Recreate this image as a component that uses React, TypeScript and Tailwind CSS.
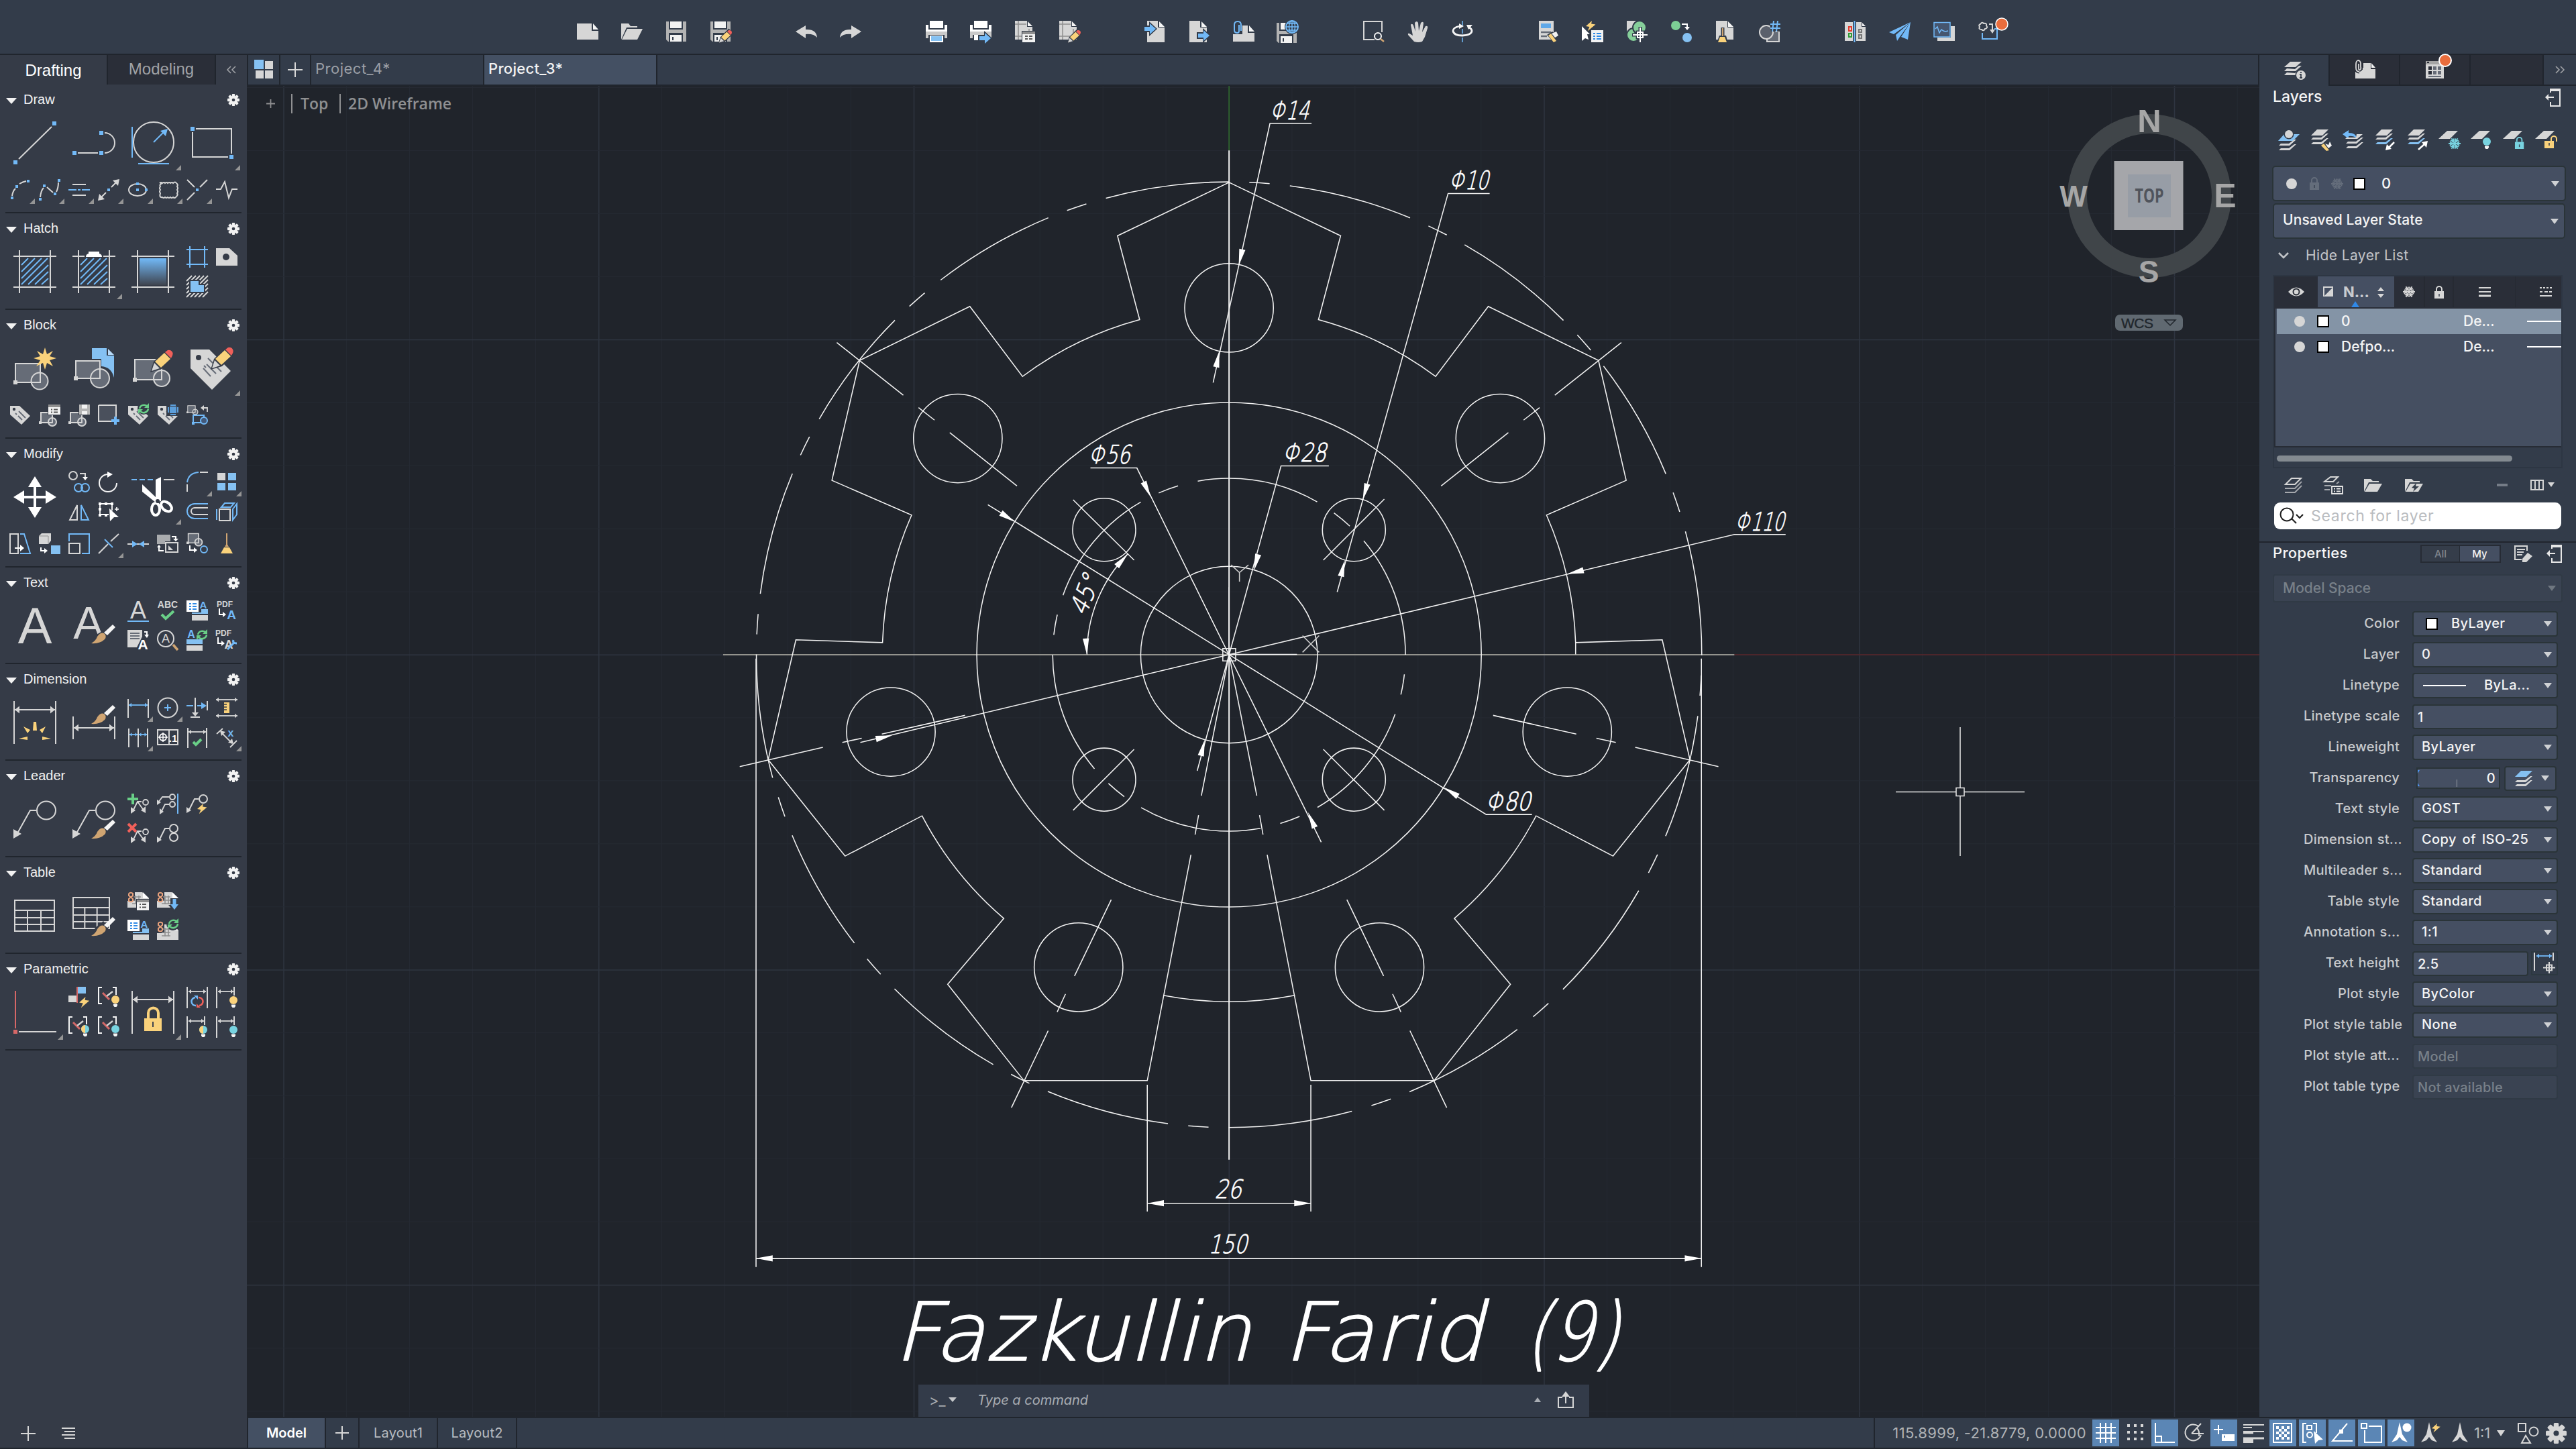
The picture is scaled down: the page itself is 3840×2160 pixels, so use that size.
import React from 'react';

const W = '#d6d6d6';
const B = '#72b9f7';
const BF = '#85c1f2';
const Y = '#fad27b';
const R = '#f0605a';
const G = '#69cf87';
const T = '#d0a572';
const C = '#78d3e0';
const D = '#666c77';
const BG = '#353b47';

type Node = React.ReactNode;

/* Drawing shorthands: stroked path, filled path, square grip */
const l = (d: string, c = W, w = 2) => <path d={d} fill="none" stroke={c} strokeWidth={w} />;
const f = (d: string, c = W) => <path d={d} fill={c} />;
const q = (x: number, y: number, c = B, s = 4) => <rect x={x - s / 2} y={y - s / 2} width={s} height={s} fill={c} />;
const o = (x: number, y: number, r: number, c = W, w = 2, fill = 'none') => <circle cx={x} cy={y} r={r} fill={fill} stroke={c} strokeWidth={w} />;
const at = (x: number, y: number, n: Node, s = 1) => <g transform={`translate(${x} ${y}) scale(${s})`}>{n}</g>;
const tx = (x: number, y: number, s: number, t: string, c = W, w = 700) => (
  <text x={x} y={y} fontSize={s} fontWeight={w} fill={c} textAnchor="middle" fontFamily="Liberation Sans, sans-serif">{t}</text>
);

function Svg({ size = 32, children }: { size?: number; children: Node }) {
  return (
    <svg width={size} height={size} viewBox={`0 0 ${size} ${size}`} className="block shrink-0 overflow-visible">
      {children}
    </svg>
  );
}

/* Reusable pieces */
const pencil = (
  <>
    {f('M-2 33 L3 17 L24 -4 L36 8 L15 28Z', BG)}
    {f('M0 31 L4 19 L12 27Z')}
    {f('M5 17 L19 4 L28 13 L14 26Z', Y)}
    {f('M20 3 L24 0 Q29 -1 31 3 Q33 6 29 12Z', R)}
  </>
);
const brush = (
  <>
    {f('M0 28 Q7 24 9 18 Q14 11 19 13 Q24 17 20 22 Q13 29 0 28Z', T)}
    {f('M19 12 L32 0 L36 4 L24 16Z', '#f5f5f5')}
  </>
);
const bolt = f('M10 0 L0 9 L6 10 L3 17 L16 6 L9 5Z', Y);
const sync = (c = G) => (
  <>
    {l('M2 8 A7 7 0 0 1 14 5', c, 2.5)}
    {l('M15 8 A7 7 0 0 1 3 12', c, 2.5)}
    {f('M16 0 V7 H9Z', c)}
    {f('M0 16 V9 H7Z', c)}
  </>
);
const blockPair = (
  <>
    {l('M3 3 H20 V18 H3Z', W, 2)}
    {f('M4 4 H19 V17 H4Z', D)}
    {q(2, 18, W)}
    {o(20, 17, 6, W, 2, D)}
    {l('M20 11 V18 H14', W, 1.8)}
  </>
);
const tag = (
  <>
    {f('M1 2 H15 L31 17 L18 30 L1 15Z')}
    <circle cx={7} cy={7} r={2.2} fill={BG} />
    {l('M14 10 L24 20 M9 13 L11 15 M13 17 L19 23', D, 1.8)}
  </>
);
const dimArrow = (x1: number, x2: number, y: number, c = W, a = 4) => (
  <>
    {l(`M${x1} ${y} H${x2}`, c, 1.8)}
    {f(`M${x1} ${y} l${a} ${-a * 0.8} v${a * 1.6}Z`, c)}
    {f(`M${x2} ${y} l${-a} ${-a * 0.8} v${a * 1.6}Z`, c)}
  </>
);
const bulb = (c: string, split = false) => (
  <>
    <circle cx={6} cy={6} r={6} fill={c} />
    {split && f('M6 0 A6 6 0 0 0 6 12Z', Y)}
    {f('M3 12.5 H9 V15 L7.5 17 H4.5 L3 15Z', '#f5f5f5')}
  </>
);
const leader = (
  <>
    {l('M6 48 L25 14 H34', W, 2)}
    <ellipse cx={49} cy={14} rx={14} ry={13.5} fill="none" stroke={W} strokeWidth={2} />
    {f('M0 42 V56 L12 49Z')}
  </>
);
const miniLeader = (
  <>
    {l('M8 26 L15 12 H21 M15 12 L25 26', W, 1.8)}
    {f('M5 20 V30 L12 25Z')}
    {f('M20 25 L27 29 V19Z')}
    {o(27, 13, 4, W, 1.8)}
  </>
);
const table = (w: number) => (
  <>
    {l(`M1 1 H${w} V47 H1Z M1 16 H${w} M1 27 H${w} M1 37 H${w} M${w / 3} 16 V47 M${(w * 2) / 3} 16 V47`)}
  </>
);
const link = <>{l('M2 5 a4 4 0 0 1 6 0 v3 l-6 5 v3 a4 4 0 0 0 6 0', '#e8a27c', 2)}{l('M2 5 v3 l6 5 v3', '#e8a27c', 2)}</>;
const sheet = <>{f('M11 3 H22 L32 12 V26 H0 V16 H11Z')}{f('M23 3 L32 12 H23Z', '#fff')}{l('M9 10 H20 M7 15 H20 M7 20 H20 M12 8 V21 M17 8 V21', '#8f8f8f', 1.6)}</>;
const listA = (
  <>
    {f('M22 13 H32 V20 H8 V18 H22Z', BF)}
    {f('M8 22 H32 V30 H8Z')}
    {f('M0 0 H18 V17 H0Z', '#fff')}
    {l('M4 5 H7 M4 9 H7 M4 13 H7 M9 5 H15 M9 9 H15 M9 13 H15', '#2f8ae5', 2)}
    {tx(25, 11.5, 15, 'A', B)}
  </>
);
const constr = (
  <>
    {l('M6 1 H1 V25 H6 M22 1 H27 V12', '#f5f5f5')}
    {l('M7 9 L17 19', '#d56767', 3)}
    {l('M13 14 L22 7', W, 2.4)}
  </>
);
const hatchFrame = l('M0 9 H64 M0 55 H64 M9 0 V64 M55 0 V64');
const hatchLines = l('M12 22 L22 12 M12 32 L32 12 M12 42 L42 12 M12 51 L51 12 M22 51 L52 22 M32 51 L52 32 M42 51 L52 42', B, 2);

interface Tool { n: Node; c?: boolean; }
const t = (n: Node, c = false): Tool => ({ n, c });

/* Draw */
const drawBig: Tool[] = [
  t(<>{l('M8 56 L57 8')}{q(3, 61, B, 6)}{q(61, 3, B, 6)}</>),
  t(<>{l('M8 47 H38 M48 17 a15 15 0 0 1 0 30')}{q(3, 47, B, 6)}{q(43, 47, B, 6)}{q(43, 17, B, 6)}</>),
  t(<>{o(33, 31, 30)}{l('M1 8 V54 M10 63 H56 M33 31 L50 14', B)}{f('M54 11 L43 14 L51 22Z', B)}</>, true),
  t(<>{l('M8 11 H61 V48 M56 53 H3 V16')}{q(3, 11, B, 6)}{q(61, 53, B, 6)}</>, true),
];
const drawSmall: Tool[] = [
  t(<>{l('M4 25 Q5 18 9 14 M15 7 Q20 4 25 3')}{q(4, 28)}{q(11, 11)}{q(28, 3)}</>, true),
  t(<>{l('M2 27 Q3 17 7 13 M12 12 L21 20 M26 19 Q29 13 29 5')}{q(2, 30)}{q(8, 10)}{q(24, 22)}{q(30, 2)}</>, true),
  t(<>{l('M6 8 H26 M6 24 H26')}{l('M0 16 H12 M14 16 H18 M20 16 H32', B)}</>, true),
  t(<>{l('M3 29 L12 20 M20 12 L29 3')}{f('M32 0 L22 2 L30 10Z')}{f('M0 32 L2 22 L10 30Z')}{q(16, 16)}</>, true),
  t(<><ellipse cx={15} cy={16} rx={13} ry={9} fill="none" stroke={W} strokeWidth={2} />{q(15, 7)}{q(15, 16)}{q(28, 16)}</>, true),
  t(<>{l('M4 6 q2 -2 4 0 q2.5 -2 4 0 q2.5 -2 4 0 q2.5 -2 4 0 q2.5 -2 4 0 q3 -3 5 0 q3 2 1 5 q2 2.500 0 5 q2 2.500 0 5 q2 3 -2 6 q-2 2 -4 0 q-2.500 2 -4 0 q-2.500 2 -4 0 q-2.500 2 -4 0 q-2.500 2 -4 0 q-5 1 -3 -6 q-2 -2.500 0 -5 q-2 -2.500 0 -5 q-2 -3 3 -5', W, 2)}</>, true),
  t(<>{l('M1 1 L12 12 M31 1 L20 12 M12 20 L1 31')}{q(16, 16)}</>, true),
  t(l('M0 15 H7 L13 4 L19 28 L24 15 H32')),
];
/* Block */
const blockBig: Tool[] = [
  t(<>{l('M3 25 H40 V53 H3Z')}{f('M4 26 H39 V52 H4Z', D)}{q(3, 53, W, 6)}{o(39, 51, 12.500, W, 2, D)}{l('M40 38 V53 H27')}{f('M47 1 L50 11 L59 6 L54 14 L64 17 L54 20 L59 29 L50 24 L47 34 L44 24 L34 29 L40 20 L30 17 L40 14 L35 6 L44 11Z', Y)}</>),
  t(<>{f('M29 2 H51 V13 H62 V46 Q58 30 43 29 V18 H29Z', BF)}{f('M53 3 L62 12 H53Z', '#b6d9f7')}{l('M5 21 H41 V47 H5Z')}{f('M6 22 H40 V46 H6Z', D)}{q(5, 47, W, 6)}{o(41, 47, 14, W, 2, D)}{l('M41 33 V47 H27')}</>),
  t(<>{l('M5 19 H45 V49 H5Z')}{f('M6 20 H44 V48 H6Z', D)}{q(5, 49, W, 6)}{o(45, 47, 12, W, 2, D)}{l('M45 35 V49 H33')}{at(30, 5, pencil)}</>),
  t(<>{f('M0 4 H28 L60 36 L32 64 L0 32Z')}<circle cx={12} cy={16} r={4} fill={BG} />{l('M26 17 L46 37 M20 28 L23 31 M24 26 L38 40 M19 32 L30 44', D, 2)}{at(32, 1, pencil)}</>, true),
];
const blockSmall: Tool[] = [
  t(tag),
  t(<>{at(0, 9, blockPair)}{f('M13 -1 H33 V16 H13Z', BG)}{f('M14 0 H32 V4 H14Z', '#8f8f8f')}{f('M14 4 H32 V15 H14Z', '#f2f2f2')}{l('M18 7.500 H20 M22 7.500 H28 M18 11.500 H20 M22 11.500 H28', '#555', 1.800)}</>),
  t(<>{at(0, 9, blockPair)}{f('M15 -1 H33 V16 H15Z', BG)}{f('M16 0 H32 V15 H16Z', '#b5b5b5')}{f('M20 0 H28 V6 H20Z M20 10 H28 V15 H20Z', '#f2f2f2')}</>),
  t(<>{l('M1 1 H27 V18 M20 25 H1 V1')}{f('M2 2 H26 V24 H2Z', '#4a505c')}{l('M26 18 V30 M20 24 H32', B, 4)}</>),
  t(<>{tag}<circle cx={24} cy={6} r={9} fill={BG} />{at(16, -2, sync())}</>),
  t(<>{tag}{f('M14 -1 H33 V17 H14Z', BG)}{f('M19 3 H29 V13 H19Z', '#5d9fdb')}{l('M20 1 H28 M20 15 H28 M17 4 V12 M31 4 V12', '#5d9fdb')}</>),
  t(<>{at(0, 0, blockPair, 0.65)}{l('M31 11 V5 H24', W, 1.800)}{f('M26 1 V9 L21 5Z')}{l('M10 16 H26 V27 H10Z', B)}{q(10, 28, B)}{o(26, 24, 5, B, 2, '#43597a')}</>),
];
/* Modify */
const moveIcon = t(<>{l('M4 32 H60 M32 4 V60', '#fff', 4)}{f('M0 32 L16 22 V42Z M64 32 L48 22 V42Z M32 1 L22 17 H42Z M32 63 L22 47 H42Z', '#fff')}</>);
const trimIcon = t(<>{l('M0 6 H8 M12 6 H20 M24 6 H32', B)}{l('M48 6 H64', W)}{f('M36 6 L44 2 V38 L36 40 L16 24 V13 L36 32Z', '#fff')}<ellipse cx={36} cy={50} rx={6} ry={9} fill="none" stroke="#fff" strokeWidth={4} /><ellipse cx={52} cy={46} rx={6} ry={9} fill="none" stroke="#fff" strokeWidth={4} transform="rotate(-50 52 46)" /><circle cx={39} cy={38} r={3} fill={BG} /></>, true);
const modA: Tool[] = [
  t(<>{o(7, 6, 6)}{l('M17 3 H25 V10')}{f('M21 8 H29 L25 13Z', '#fff')}{o(15, 24, 6, B)}{o(25, 24, 6, B)}</>),
  t(<>{l('M15 4 A13 13 0 1 0 28 17', '#f5f5f5')}{f('M14 0 L22 4 L14 9Z', '#fff')}</>),
  t(<>{l('M13 6 V28 H2Z')}{l('M19 6 V28 H30Z', B)}</>),
  t(<>{l('M3 4 H21 V14 M3 4 V20 H16', '#fff', 1.800)}{q(3, 4, '#fff')}{q(12, 4, '#fff')}{q(21, 4, '#fff')}{q(3, 12, '#fff')}{q(3, 21, '#fff')}{q(12, 21, '#fff')}{f('M17 11 L31 24 H24 L18 30Z', '#fff')}{l('M28 9 V15 M25 12 H31', '#fff', 1.600)}</>),
];
const modB: Tool[] = [
  t(<>{l('M1 16 Q3 2 18 1', B)}{l('M20 1 H32 M1 19 V30')}</>, true),
  t(<>{f('M2 2 H14 V13 H2Z')}{f('M18 2 H30 V13 H18Z M2 17 H14 V28 H2Z M18 17 H30 V28 H18Z', BF)}</>, true),
  t(<>{l('M32 4 H12 A11 11 0 0 0 12 26 H32', B)}{l('M32 10 H12 A5 5 0 0 0 12 20 H32')}</>),
  t(<>{l('M5 12 H21 V29 H5Z')}{l('M1 12 V28 M8 9 L13 3 H27 L22 9Z M25 28 V12 L31 4 V20Z', B)}</>),
];
const modSmall: Tool[] = [
  t(<>{l('M1 1 H13 V30 H1Z')}{l('M16 1 H22 L31 30 H16', B)}{l('M8 22 H18', '#fff')}{f('M16 17 L22 22 L16 27Z', '#fff')}</>),
  t(<>{f('M0 4 L4 0 H18 V11 L14 16 H0Z')}{l('M0 4 H14 V16', '#8f8f8f', 1)}{f('M18 18 H32 V31 H18Z', BF)}{l('M3 21 V26 H9', '#fff')}{f('M8 22 L13 26 L8 30Z', '#fff')}</>),
  t(<>{l('M1 12 V1 H31 V30 H20', B)}{l('M1 15 H17 V30 H1Z')}</>),
  t(<>{l('M1 30 L15 16 M19 12 L31 1')}{l('M10 9 L22 21', B)}</>, true),
  t(<>{l('M0 16 H32')}{f('M7 11 V21 L15 16Z M25 11 V21 L17 16Z', B)}</>),
  t(<>{f('M0 2 H20 V12 H12 V16 H0Z', '#a9abae')}{l('M13 14 H31 V28 H13Z')}{f('M17 18 L24 25 H17Z')}{l('M22 5 H28 V9 M3 20 V26 H10', '#fff')}{f('M24 8 H32 L28 12Z M0 21 L3 17 L6 21Z', '#fff')}</>),
  t(<>{at(0, -2, blockPair, 0.9)}{l('M5 18 V25 H12', '#fff')}{f('M11 21 L16 25 L11 29Z', '#fff')}{o(26, 24, 5, B)}</>),
  t(<>{l('M16 0 V18', T)}{f('M13 20 L16 15 L19 20Z', T)}{f('M12 21 H20 L25 30 H7Z', Y)}</>),
];
const textBig: Tool[] = [
  t(tx(32, 58, 76, 'A', W, 400)),
  t(<>{tx(24, 51, 68, 'A', W, 400)}{at(28, 30, <>{f('M-2 31 L6 16 L20 8 L26 16 L20 26Z', BG)}{brush}</>)}</>),
];
const textSmall: Tool[] = [
  t(<>{tx(16, 27, 36, 'A', W, 400)}{l('M0 31 H32', B)}</>),
  t(<>{tx(16, 11, 14, 'ABC')}{l('M7 21 L13 27 L25 16', G, 4)}</>),
  t(listA),
  t(<>{tx(13, 10, 12, 'PDF')}{l('M5 12 V21 H10', '#fff')}{f('M10 17 L15 21 L10 25Z', '#fff')}{tx(23, 28, 19, 'A', B)}</>),
  t(<>{f('M0 0 H22 V10 L14 26 H0Z')}{l('M4 5 H18 M4 9 H18 M4 13 H18', D)}{tx(23, 29, 21, 'A', '#fff')}{l('M25 3 H29 V8', '#fff')}{f('M25 7 H32 L29 12Z', '#fff')}</>),
  t(<>{o(13, 13, 12)}{tx(13, 19, 18, 'A', W, 400)}{l('M24 22 L31 30', T, 3.500)}</>),
  t(<>{tx(7, 12, 16, 'A', B)}{f('M0 14 H24 V21 H0Z', BF)}{f('M0 23 H24 V31 H0Z')}{at(15, -1, sync())}</>),
  t(<>{tx(11, 9, 12, 'PDF')}{l('M3 11 V20 H8', '#fff')}{f('M8 16 L13 20 L8 24Z', '#fff')}{tx(19, 28, 18, 'A', W)}{l('M17 29 L28 18 M26 15 Q24 20 31 20', B, 3)}</>),
];
const dimBig: Tool[] = [
  t(<>{l('M1 0 V64 M63 0 V64')}{dimArrow(2, 62, 13, W, 7)}{f('M30 31 H34 L35 44 H29Z M15 38 L25 43 L21 48Z M48 38 L39 43 L43 48Z M8 56 L21 53 V58Z M56 56 L43 53 V58Z', Y)}</>),
  t(<>{l('M1 23 V57 M63 23 V57')}{dimArrow(2, 62, 40, W, 7)}{at(28, 6, <>{f('M-2 31 L8 14 L22 10 L26 18 L20 28Z', BG)}{brush}</>)}</>),
];
const dimSmall: Tool[] = [
  t(<>{l('M1 3 V31 M31 3 V31')}{dimArrow(2, 30, 12, B)}</>, true),
  t(<>{o(16, 16, 14.500)}{l('M16 11 V21 M11 16 H21', B)}</>, true),
  t(<>{l('M13 1 V25 M6 30 H20')}{f('M8 23 H18 L13 29Z')}{l('M0 13 H10 M16 13 H24', B)}{f('M22 8 V18 L30 13Z', B)}{l('M31 6 V20')}</>),
  t(<>{dimArrow(0, 32, 4)}{dimArrow(0, 32, 28)}{f('M12 8 H20 V24 H12Z', Y)}{l('M12 11 H16 M12 15 H16 M12 19 H16', BG, 1.500)}</>),
  t(<>{l('M2 3 V31 M16 3 V31 M30 3 V31')}{dimArrow(3, 15, 12, B, 3.500)}{dimArrow(17, 29, 12, B, 3.500)}</>, true),
  t(<>{l('M1 5 H31 V27 H1Z M18 5 V27')}{o(9, 16, 5, '#fff')}{l('M9 9 V23 M2 16 H16', '#fff', 1.500)}{tx(24, 23, 15, '.1', '#fff')}</>),
  t(<>{l('M2 2 V32 M30 2 V32')}{dimArrow(3, 29, 8)}{l('M10 23 L14 27 L22 19', G, 4)}</>),
  t(<>{l('M1 11 L10 3 M21 31 L31 21 M8 9 L24 25', W, 1.800)}{f('M6 6 L14 8 L8 14Z M26 26 L18 24 L24 18Z')}{tx(22, 15, 16, 'x', B)}</>, true),
];
const ldBig: Tool[] = [t(at(0, 5, leader)), t(<>{at(0, 5, leader)}{at(28, 33, brush)}</>)];
const ldTop: Tool[] = [
  t(<>{l('M8 0 V16 M0 8 H16', G, 4)}{miniLeader}</>),
  t(<>{l('M2 13 L8 5 H18 M6 28 L12 16 H18', W, 1.800)}{f('M0 9 V17 L6 13Z M4 22 V31 L10 27Z')}{o(23, 5, 4)}{o(23, 16, 4)}{l('M31 0 V30', B)}</>),
  t(<>{l('M4 24 L12 8 H18')}{f('M0 20 V29 L7 25Z')}{o(25, 8, 6)}{at(16, 15, bolt, 0.9)}</>),
];
const ldBottom: Tool[] = [
  t(<>{l('M1 1 L13 13 M13 1 L1 13', R, 4)}{miniLeader}</>),
  t(<>{l('M4 24 L12 8 H18')}{f('M0 20 V29 L7 25Z')}{o(25, 8, 6)}{o(25, 21, 6)}</>),
];
const tbBig: Tool[] = [t(at(1, 8, table(60))), t(<>{at(0, 4, table(55))}{at(28, 34, <>{f('M-2 31 L6 16 L18 6 L26 16 L20 26Z', BG)}{brush}</>)}</>)];
const tbSmall: Tool[] = [
  t(<>{sheet}{link}{f('M13 13 H33 V31 H13Z', BG)}{f('M14 14 H32 V30 H14Z', '#f2f2f2')}{f('M14 14 H32 V18 H14Z', '#8f8f8f')}{l('M18 21 H20 M22 21 H28 M18 25.500 H20 M22 25.500 H28', '#555', 1.800)}</>),
  t(<>{sheet}{link}{f('M20 12 H32 V22 H35 L26 33 L17 22 H20Z', BG)}{l('M26 13 V24', B, 5)}{f('M20 21 H32 L26 29Z', B)}</>),
  t(listA),
  t(<>{at(0, 4, sheet)}{link}<circle cx={24} cy={6} r={10} fill={BG} />{at(16, -2, sync())}</>),
];
const pA: Tool[] = [
  t(<>{f('M14 0 H26 V10 H14Z', BF)}{f('M0 13 H12 V23 H0Z')}{l('M13 0 V24', '#d56767')}{at(16, 15, bolt, 0.95)}</>),
  t(<>{constr}{at(20, 13, bulb(Y))}</>),
  t(<>{constr}{at(19, 13, bulb(C, true))}</>),
  t(<>{constr}{at(20, 13, bulb(C))}</>),
];
const pB: Tool[] = [
  t(<>{l('M1 0 V32 M31 0 V32')}{dimArrow(3, 29, 7)}{l('M13 16 A6 6 0 0 0 14 28', B, 2.500)}{l('M19 28 A6 6 0 0 0 18 16', R, 2.500)}{f('M11 13 H17 V19Z', B)}{f('M21 31 H15 V25Z', R)}</>),
  t(<>{l('M1 0 V32 M27 0 V13')}{dimArrow(3, 26, 7)}{at(20, 14, bulb(Y))}</>),
  t(<>{l('M1 0 V32 M27 0 V13')}{dimArrow(3, 26, 7)}{at(19, 14, bulb(C, true))}</>),
  t(<>{l('M1 0 V32 M27 0 V13')}{dimArrow(3, 26, 7)}{at(20, 14, bulb(C))}</>),
];

const Corner = ({ big = false }: { big?: boolean }) => (
  <svg width={8} height={8} className={big ? 'absolute right-[2px] bottom-[3px]' : 'absolute right-0 bottom-[1px]'}>{f('M8 0 V8 H0Z', '#959595')}</svg>
);
function Cell({ tool, big = false }: { tool: Tool; big?: boolean }) {
  return (
    <div className={big ? 'relative col-span-2 row-span-2 flex h-[88px] items-center justify-center' : 'relative flex h-11 items-center justify-center'}>
      <Svg size={big ? 64 : 32}>{tool.n}</Svg>
      {tool.c && <Corner big={big} />}
    </div>
  );
}
const Quad = ({ tools }: { tools: Tool[] }) => (
  <div className="col-span-2 row-span-2 grid grid-cols-2">{tools.map((x, i) => <Cell key={i} tool={x} />)}</div>
);
function Gear({ size = 18, color = '#f2f2f2', bg = BG }: { size?: number; color?: string; bg?: string }) {
  return (
    <svg width={size} height={size} viewBox="-10 -10 20 20" className="block">
      {[0, 45, 90, 135].map(a => <rect key={a} x={-2.4} y={-10} width={4.8} height={20} rx={1} fill={color} transform={`rotate(${a})`} />)}
      <circle r={7} fill={color} />
      <circle r={2.600} fill={bg} />
    </svg>
  );
}
function Section({ title, tall = false, children }: { title: string; tall?: boolean; children: Node }) {
  return (
    <section className={tall ? 'mx-2 h-48 shrink-0 border-b-2 border-[#20252d]' : 'mx-2 h-36 shrink-0 border-b-2 border-[#20252d]'}>
      <div className="flex h-[43px] items-center pt-[3px] pr-[3px] pl-px">
        <svg width={16} height={9} className="mt-[2px]">{f('M0 0 H16 L8 9Z', '#f2f2f2')}</svg>
        <span className="ml-[10px] flex-1 pb-[3px] text-[20px] leading-6 text-[#f0f0f0]">{title}</span>
        <Gear />
      </div>
      {children}
    </section>
  );
}
const Grid = ({ children }: { children: Node }) => <div className="grid grid-cols-8">{children}</div>;
const Row = ({ tools }: { tools: Tool[] }) => <div className="mt-1 grid grid-cols-8">{tools.map((x, i) => <Cell key={i} tool={x} />)}</div>;

function ToolPalette() {
  return (
    <aside className="flex w-[368px] shrink-0 flex-col bg-[#353b47] font-['Liberation_Sans',sans-serif]">
      <Section title="Draw" tall>
        <Grid>{drawBig.map((x, i) => <Cell key={i} tool={x} big />)}</Grid>
        <Row tools={drawSmall} />
      </Section>
      <Section title="Hatch">
        <Grid>
          <Cell big tool={t(<>{hatchFrame}{hatchLines}</>)} />
          <Cell big tool={t(<>{hatchFrame}{hatchLines}{f('M18 4 H46 V11 H18Z', BG)}{f('M24 2 H40 V5 Q44 6 44 10 H20 Q20 6 24 5Z', '#fff')}</>, true)} />
          <Cell big tool={t(<><defs><linearGradient id="hg" x1="0" x2="0" y1="0" y2="1"><stop offset="0" stopColor={B} /><stop offset="1" stopColor="#3f444f" /></linearGradient></defs>{hatchFrame}<rect x={12} y={12} width={40} height={40} fill="url(#hg)" /></>)} />
          <Quad tools={[
            t(l('M0 5 H32 M0 27 H32 M5 0 V32 M27 0 V32', B)),
            t(<>{f('M0 3 H20 L32 14 V29 H0Z')}<circle cx={15} cy={16} r={5} fill={BG} /></>),
            t(<>{l('M0 8 L8 0 M0 14 L14 0 M0 20 L20 0 M0 26 L26 0 M0 32 L32 0 M6 32 L32 6 M12 32 L32 12 M18 32 L32 18 M24 32 L32 24', W, 2)}{f('M4 6 H20 V12 H28 V26 H4Z', BG)}{f('M6 8 H18 V14 H26 V24 H6Z', BF)}</>),
          ]} />
        </Grid>
      </Section>
      <Section title="Block" tall>
        <Grid>{blockBig.map((x, i) => <Cell key={i} tool={x} big />)}</Grid>
        <Row tools={blockSmall} />
      </Section>
      <Section title="Modify" tall>
        <Grid><Cell big tool={moveIcon} /><Quad tools={modA} /><Cell big tool={trimIcon} /><Quad tools={modB} /></Grid>
        <Row tools={modSmall} />
      </Section>
      <Section title="Text">
        <Grid>{textBig.map((x, i) => <Cell key={i} tool={x} big />)}{textSmall.map((x, i) => <Cell key={'s' + i} tool={x} />)}</Grid>
      </Section>
      <Section title="Dimension">
        <Grid>{dimBig.map((x, i) => <Cell key={i} tool={x} big />)}{dimSmall.map((x, i) => <Cell key={'s' + i} tool={x} />)}</Grid>
      </Section>
      <Section title="Leader">
        <Grid>{ldBig.map((x, i) => <Cell key={i} tool={x} big />)}{ldTop.map((x, i) => <Cell key={'s' + i} tool={x} />)}<div />{ldBottom.map((x, i) => <Cell key={'u' + i} tool={x} />)}</Grid>
      </Section>
      <Section title="Table">
        <Grid>{tbBig.map((x, i) => <Cell key={i} tool={x} big />)}<Quad tools={tbSmall} /></Grid>
      </Section>
      <Section title="Parametric">
        <Grid>
          <Cell big tool={t(<>{l('M3 0 V56', '#d56767')}{l('M8 61 H64', W)}{q(3, 61, '#d56767', 6)}</>, true)} />
          <Quad tools={pA} />
          <Cell big tool={t(<>{l('M1 0 V64 M63 0 V64')}{dimArrow(2, 62, 13, W, 7)}{l('M25 42 V33 A7.500 7.500 0 0 1 40 33 V42', Y, 4)}{f('M19 41 H45 V60 H19Z', Y)}{l('M32 46 V54', '#3f444f')}</>, true)} />
          <Quad tools={pB} />
        </Grid>
      </Section>
      <div className="flex-1" />
    </aside>
  );
}

/* Application toolbar */
const doc = (x = 0, y = 4) => at(x, y, <>{f('M0 0 H22 V11 H32 V24 H0Z')}{f('M24 0 L32 9 H24Z', '#f5f5f5')}</>);
const page = <>{f('M4 0 H20 V10 H30 V32 H4Z')}{f('M22 1 L30 9 H22Z', '#f5f5f5')}</>;
const floppy = <>{f('M1 1 H31 V31 H4 L1 28Z', '#b3b3b3')}{f('M5 0 H26 V13 H5Z M5 18 H26 V32 H5Z', '#333c4a')}{f('M7 1 H24 V11 H7Z M7 21 H24 V31 H7Z', '#f2f2f2')}{l('M11 24 V29', '#333c4a')}</>;
const printer = <>{f('M6 0 H26 V11 H6Z', '#fff')}{f('M0 6 H4 V13 H28 V6 H32 V16 H0Z', '#fff')}{f('M0 16 H32 V26 H28 V21 H4 V26 H0Z', '#c9c9c9')}</>;
const plotPage = <>{f('M1 0 H19 V9 H27 V28 H1Z')}{f('M20 1 L27 8 H20Z', '#f5f5f5')}{l('M1 5 H18 M1 23 H20 M6 0 V28 M22 12 V28', '#8f8f8f', 1.500)}</>;
const arrowR = <>{f('M-2 3 H7 V-3 L19 8 L7 19 V13 H-2Z', '#333c4a')}{f('M0 5 H8 V0 L17 8 L8 16 V11 H0Z', B)}</>;
const clip = l('M9 6 V15 Q9 18 6.500 18 Q2 18 2 14 V6 Q2 1 7 1 Q12 1 12 6 V15', B, 2);
const topGroups: Node[][] = [
  [
    doc(),
    <>{f('M0 28 V4 H11 L14 8 H24 V10 H8Z')}{f('M9 12 H32 L24 28 H1Z')}</>,
    floppy,
    <>{floppy}{at(14, 14, pencil, 0.6)}</>,
  ],
  [
    <>{f('M0 16 L15 7 V13 Q31 12 32 25 Q27 19 15 20 V26Z')}</>,
    <>{f('M32 16 L17 7 V13 Q1 12 0 25 Q5 19 17 20 V26Z')}</>,
  ],
  [
    <>{printer}{f('M6 22 H26 V32 H6Z', '#fff')}{f('M8 23 H24 V30 H8Z', BF)}</>,
    <>{printer}{f('M6 21 H20 V29 H6Z', '#fff')}{at(14, 18, arrowR)}</>,
    <>{plotPage}{f('M11 15 H33 V33 H11Z', '#333c4a')}{f('M12 16 H31 V32 H12Z', '#f2f2f2')}{f('M12 16 H31 V20 H12Z', '#8f8f8f')}{l('M16 23 H20 M22 23 H27 M16 27 H20 M22 27 H27', '#555')}</>,
    <>{plotPage}{at(14, 14, pencil, 0.6)}</>,
  ],
  [
    <>{page}{at(0, 4, arrowR)}</>,
    <>{at(-3, 0, page)}{at(14, 14, arrowR)}</>,
    <>{at(0, 3, doc())}{f('M0 0 H14 V20 H0Z', '#333c4a')}{clip}</>,
    <>{at(-2, 2, floppy)}<circle cx={22} cy={9} r={11} fill="#333c4a" />{o(22, 9, 9, B)}{l('M22 0 V18 M13 9 H31 M15 4 H29 M15 14 H29', B, 1.500)}<ellipse cx={22} cy={9} rx={4.500} ry={9} fill="none" stroke={B} strokeWidth={1.500} /></>,
  ],
  [
    <>{l('M28 17 V1 H1 V28 H17')}{o(22, 23, 5, '#f5f5f5')}{l('M26 27 L31 31', T, 2.500)}</>,
    <>{f('M10 31 L1 21 Q0 18 3 19 L8 22 L5 6 Q7 3 9 7 L12 16 L11 3 Q14 -1 16 3 L17 15 L20 3 Q24 0 24 4 L22 17 L27 8 Q31 7 30 11 L26 24 L22 31 Q16 33 10 31Z')}</>,
    <>{l('M16 0 V7 M16 12 V19 M16 25 V32', B, 1.500)}{l('M12 8 Q2 10 2 15 Q3 22 16 22 Q30 21 30 15 Q30 12 26 10', '#f5f5f5', 2.800)}{f('M11 4 V12 L18 8Z M22 6 H31 L25 13Z', '#f5f5f5')}</>,
  ],
  [
    <>{f('M2 0 H24 V28 H2Z')}{f('M5 4 H20 V11 H5Z', '#5fa8e8')}{l('M5 17 H20 M5 23 H14', D, 2.500)}{f('M14 21 L22 16 L32 24 L24 32Z', '#333c4a')}{f('M16 22 L20 19 L28 30 L24 32Z', Y)}{f('M21 19 L28 16 L31 22 L26 25Z', '#f2f2f2')}</>,
    <>{f('M0 8 L12 20 L8 20 L10 28 L5 26 L0 30Z', '#fff')}{at(6, 0, bolt, 0.9)}{f('M14 14 H32 V32 H14Z', '#f2f2f2')}{l('M17 19 H20 M22 19 H29 M17 23 H20 M22 23 H29 M17 27 H20 M22 27 H29', '#2f8ae5')}</>,
    <>{f('M1 0 H17 L8 14 L1 18Z')}{o(11, 21, 10, '#333c4a', 2, '#86cf9a')}{o(20, 10, 10, '#333c4a', 2, '#86cf9a')}{l('M21 9 V33 M9 21 H33', '#333c4a', 5)}{l('M17 17 H25 V25 H17Z', '#333c4a', 5)}{l('M21 10 V32 M10 21 H32', '#fff')}{l('M17 17 H25 V25 H17Z', '#fff')}</>,
    <>{<circle cx={8} cy={7} r={7} fill="#7ccf95" />}{l('M17 5 H25 V10', '#fff')}{f('M21 9 H29 L25 14Z', '#fff')}<circle cx={25} cy={25} r={7} fill={BF} /></>,
    <>{f('M2 0 H19 V10 H28 V28 H2Z')}{f('M20 1 L28 9 H20Z', '#f5f5f5')}{l('M12 10 V22', '#333c4a', 5)}{f('M7 22 H17 L20 33 H3Z', '#333c4a')}{l('M12 11 V23', T)}{f('M8 24 H15 L18 32 H5Z', Y)}</>,
    <>{f('M12 16 H30 V31 H12Z', D)}{l('M12 18 V31 H30 V16 H24')}{o(11, 17, 10, W, 2, '#5a606c')}{f('M15 -1 H33 V16 H18Z', '#333c4a')}{l('M22 0 L20 16 M28 0 L26 16 M17 5 H32 M17 11 H32', B)}</>,
  ],
  [
    <>{f('M0 2 H12 V30 H0Z')}{f('M17 2 H25 V9 H31 V30 H17Z')}{f('M26 3 L31 8 H26Z', '#f5f5f5')}{l('M6 9 H10 V15 H6Z', '#e5392c')}{l('M6 19 H10 V24 H6Z', '#2e9b34')}{l('M21 13 H25 V17 H21Z M21 21 H25 V26 H21Z', '#777')}{l('M14.500 0 V32', B)}</>,
    <>{f('M32 2 L0 17 L7 20Z M32 2 L10 21 L12 30 L16 24Z M32 2 L18 24 L28 28Z', B)}</>,
    <>{f('M26 8 H32 V30 H6 V25 H26Z')}{f('M1 3 H25 V24 H1Z', '#46566f')}{l('M1 2.500 H25 V24 H1Z', B, 1.500)}{l('M3 12 L6 9 L9 18 L12 13 L15 15 L18 16 L22 15', B, 1.500)}</>,
    <>{l('M4 5 q3 -4 5 -1 q5 -1 4 3 q3 4 -2 5 q-2 4 -5 1 q-5 0 -3 -4 q-2 -3 1 -4Z', W, 2)}{l('M17 5 H22 V14')}{f('M18 13 H26 L22 19Z')}{l('M7 18 V27 H29 V12 H25', B)}<circle cx={36} cy={5} r={9} fill="#ea6d3c" stroke="#fff" strokeWidth={1.500} /></>,
  ],
];

function TopToolbar() {
  return (
    <header className="flex h-[82px] shrink-0 items-start gap-24 border-b-2 border-[#20252d] bg-[#333c4a] pt-[31px] pl-[860px]">
      {topGroups.map((g, i) => (
        <div key={i} className="flex gap-[34px]">{g.map((n, j) => <Svg key={j}>{n}</Svg>)}</div>
      ))}
    </header>
  );
}

const layersIcon = <>{f('M10 3 H27 L18 11 H1Z')}{f('M5 13 L1 17 H18 L27 9 H23 L17 14Z')}{f('M5 19 L1 23 H18 L27 15 H23 L17 20Z')}</>;
const clipPage = <>{f('M1 11 H13 V4 H24 V13 H31 V27 H1Z')}{f('M25 4 L31 11 H25Z', '#f2f2f2')}{f('M0 -2 H12 V14 H0Z', '#2a2e38')}{l('M6 5 V12 Q6 15 8 14 Q10 13 9 9 V4 Q8 0 5 0 Q2 1 2 6 V11 Q2 17 7 17', '#2a2e38', 5)}{l('M6 5 V12 Q6 15 8 14 Q10 13 9 9 V4 Q8 0 5 0 Q2 1 2 6 V11 Q2 17 7 17', W, 1.800)}</>;

function TabsRow() {
  return (
    <div className="flex h-[46px] shrink-0 bg-[#20252d] pb-[2px]">
      <div className="-mb-[2px] flex w-[159px] items-center justify-center bg-[#353b47] pb-px font-['Liberation_Sans',sans-serif] text-[24px] text-white">Drafting</div>
      <div className="ml-[2px] flex w-[159px] items-center justify-center bg-[#2a2e38] pb-[2px] font-['Liberation_Sans',sans-serif] text-[24px] text-[#a0a2a6]">Modeling</div>
      <div className="ml-[2px] flex w-[46px] items-center justify-center bg-[#353b47]"><Svg size={14}>{l('M6 2 L1 7 L6 12 M13 2 L8 7 L13 12', '#a0a2a6', 1.600)}</Svg></div>
      <div className="ml-[2px] flex w-[46px] items-center justify-center bg-[#333c4a] pl-px">
        <Svg size={30}>{f('M0 0 H14 V14 H0Z', BF)}{f('M16 2 H28 V14 H16Z M2 16 H14 V28 H2Z M16 16 H28 V28 H16Z')}</Svg>
      </div>
      <div className="ml-[2px] flex w-[44px] items-center justify-center bg-[#333c4a]"><Svg size={22}>{l('M11 0 V22 M0 11 H22')}</Svg></div>
      <div className="ml-[2px] w-[256px] bg-[#333c4a] pl-[6px] font-['Inter',sans-serif] text-[22px] leading-[41px] tracking-[0.5px] text-[#9b9fa6]">Project_4*</div>
      <div className="ml-[2px] w-[256px] bg-[#445063] pl-[6px] font-['Inter',sans-serif] text-[22px] leading-[41px] font-medium tracking-[0.3px] text-[#f2f2f2]">Project_3*</div>
      <div className="ml-[2px] flex-1 bg-[#333c4a]" />
      <div className="-mb-[2px] ml-[2px] flex w-[103px] items-center justify-center bg-[#333c4a]"><Svg size={34}>{at(1, 1, layersIcon)}<circle cx={27} cy={24} r={8.500} fill="#333c4a" /><circle cx={27} cy={24} r={7} fill={W} />{l('M27 19 V21 M25 23 H27 V28 M25 28 H29', '#333c4a', 1.800)}</Svg></div>
      <div className="ml-[2px] flex w-[103px] items-center justify-center bg-[#2a2e38]"><Svg>{at(1, 2, clipPage)}</Svg></div>
      <div className="relative ml-[2px] flex w-[103px] items-center justify-center bg-[#2a2e38]">
        <Svg size={28}>{f('M0 1 H27 V27 H0Z')}{f('M0 1 H27 V6 H0Z', '#a5a5a5')}{f('M4 9 H9 V14 H4Z M4 16 H9 V21 H4Z M2 2 H5 V4 H2Z', '#2a2e38')}{f('M11 9 H16 V14 H11Z M18 9 H23 V14 H18Z M11 16 H16 V21 H11Z M18 16 H23 V21 H18Z', '#666b76')}{l('M4 24 H23', D)}</Svg>
        <div className="absolute -top-[2px] right-[26px] size-5 rounded-full border-2 border-white bg-[#ea6d3c]" />
      </div>
      <div className="ml-[2px] w-[107px] bg-[#2a2e38]" />
      <div className="ml-[2px] flex w-[48px] items-center justify-center bg-[#333c4a]"><Svg size={14}>{l('M1 2 L6 7 L1 12 M8 2 L13 7 L8 12', '#a0a2a6', 1.600)}</Svg></div>
    </div>
  );
}

/* Model space geometry */
const CX = 728;
const CY = 828.5;
const arrow = (x: number, y: number, fx: number, fy: number) => {
  const d = Math.hypot(fx - x, fy - y);
  const ux = (fx - x) / d;
  const uy = (fy - y) / d;
  return f(`M${x} ${y} L${x + ux * 24 - uy * 4.500} ${y + uy * 24 + ux * 4.500} L${x + ux * 24 + uy * 4.500} ${y + uy * 24 - ux * 4.500}Z`, '#fff');
};
const gost = (x: number, y: number, s: string, w: number, size = 37) => (
  <g transform={`translate(${x} ${y}) skewX(-14)`}>
    <text fontSize={size} fill="#fff" stroke="#fff" strokeWidth={size > 50 ? 1.6 : 0.8} strokeLinejoin="round" fontFamily="DejaVu Sans, sans-serif" fontWeight={200} textLength={w} lengthAdjust="spacingAndGlyphs">{s}</text>
  </g>
);

function Drawing() {
  const v = Array.from({ length: 33 }, (_, i) => i - 16);
  const h = Array.from({ length: 23 }, (_, i) => i - 10);
  const holes = Array.from({ length: 7 }, (_, i) => (i * 2 * Math.PI) / 7);
  const mirror = (n: Node) => <>{n}<g transform={`translate(${CX * 2} 0) scale(-1 1)`}>{n}</g></>;
  return (
    <svg width={3000} height={1984} viewBox="368 128 3000 1984" className="block">
      {v.map(i => <rect key={i} x={1831.500 + i * 93.950} y={128} width={i % 5 ? 1 : 1.500} height={1984} fill={i % 5 ? '#262b34' : '#2e3440'} />)}
      {h.map(i => <rect key={i} x={368} y={975.500 + i * 93.950} width={3000} height={i % 5 ? 1 : 1.500} fill={i % 5 ? '#262b34' : '#2e3440'} />)}
      <g transform="translate(1080 120) scale(1.03316)" fill="none" stroke="#f2f2f2" strokeWidth={1.500}>
        <path d="M728 8 V101" stroke="#2f6b2c" />
        <path d="M1457 828.500 H2216" stroke="#5a2529" />
        <path d="M728 101 V1557" strokeWidth={1.900} />
        <path d="M-2 828.500 H1457" stroke="#b9b6ab" />
        <path d="M1410 828.500 A682 682 0 1 0 46 828.500 A682 682 0 1 0 1410 828.500" strokeDasharray="180 29.400 29.400 29" />
        <path d="M982.500 828.500 A254.500 254.500 0 1 0 473.500 828.500 A254.500 254.500 0 1 0 982.500 828.500" strokeDasharray="178.500 29.300 29.700 29" />
        <circle cx={CX} cy={CY} r={364} />
        <circle cx={CX} cy={CY} r={127.500} />
        {holes.map(a => <circle key={a} cx={CX + 500.500 * Math.sin(a)} cy={CY - 500.500 * Math.cos(a)} r={64} />)}
        {[[-1, -1], [1, -1], [-1, 1], [1, 1]].map(([a, b]) => <circle key={`${a}${b}`} cx={CX + a * 180.200} cy={CY + b * 180.200} r={45.500} />)}
        {mirror(<path d="M728 147 L889 224 L857 345 A500 500 0 0 1 1026 427 L1102 326 L1261 404 L1301 577 L1186 627 A500 500 0 0 1 1228 811 L1353 807 L1393 980 L1282 1119 L1171 1061 A500 500 0 0 1 1053 1209 L1134 1304 L1024 1443 H846 L783 1117 M777 1088 L772 1060 M768 1032 L728 828.500" />)}
        <path d="M1228 811 V828 M633 1320 A500 500 0 0 0 823 1320" />
        {mirror(<path d="M1434 990 L1314 962 M1286 955 L1258 949 M1229 943 L1109 916 M1294 378 L1198 454 M1176 472 L1153 490 M1131 508 L1034 585 M1042 1482 L989 1371 M976 1344 L964 1318 M951 1292 L898 1182" />)}
        <path d="M503 605 L591 692 M952 604 L864 692 M503 1053 L591 965 M864 965 L952 1053" />
        <path d="M847 62 H787 L705 436 M1104 163 H1044 L884 738 M528 559 H595 L861 1099 M872 556 H803 L682 996 M1531 655 H1457 L196 955 M1165 1059 H1099 L380 612" />
        <path d="M523 828 A205 205 0 0 1 582 683" />
        <path d="M45.500 834 V1712 M1409.500 834 V1712 M45.500 1699.500 H1409.500 M610 1449 V1632 M846 1449 V1632 M610 1620 H846" />
        <path d="M719 819.500 H737.500 V837.500 H719Z M728 828 H826 M728 731 V828" />
        <path d="M731 699 L743 710 L756 699 M743 710 V723 M834 801 L858 825 M858 801 L834 825" stroke="#d0d0d0" />
        <g stroke="none">
          {arrow(742, 267, 787, 62)}{arrow(714, 390, 705, 436)}
          {arrow(921, 605, 1044, 163)}{arrow(895, 692, 884, 738)}
          {arrow(615, 601, 595, 559)}{arrow(842, 1056, 861, 1099)}
          {arrow(764, 707, 803, 556)}{arrow(693, 951, 682, 996)}
          {arrow(1216, 712, 1457, 655)}{arrow(242, 945, 196, 955)}
          {arrow(1038, 1020, 1099, 1059)}{arrow(419, 637, 380, 612)}
          {arrow(523, 829, 521, 800)}{arrow(582, 683, 563, 704)}
          {arrow(45.500, 1699.500, 90, 1699.500)}{arrow(1409.500, 1699.500, 1380, 1699.500)}
          {arrow(610, 1620, 640, 1620)}{arrow(846, 1620, 800, 1620)}
          {gost(787, 56, 'Φ14', 56)}
          {gost(1045, 157, 'Φ10', 57)}
          {gost(525, 553, 'Φ56', 60)}
          {gost(805, 550, 'Φ28', 63)}
          {gost(1458, 649, 'Φ110', 71)}
          {gost(1098, 1053, 'Φ80', 65)}
          <g transform="translate(522 772) rotate(-69)">{gost(-2, 0, '45°', 58)}</g>
          {gost(707, 1613, '26', 39)}
          {gost(698, 1692, '150', 56)}
        </g>
      </g>
      {gost(1332, 2028, 'Fazkullin', 533, 121)}
      {gost(1913, 2028, 'Farid', 298, 121)}
      {gost(2272, 2028, '(9)', 141, 121)}
      {l('M2826 1180.500 H2916 M2928 1180.500 H3018 M2922 1084 V1174.500 M2922 1186.500 V1276 M2916 1174.500 H2928 V1186.500 H2916Z', '#e8e8e8', 1.500)}
      {/* view cube */}
      <circle cx={3204} cy={292} r={107.500} fill="none" stroke="#404549" strokeWidth={29} />
      <rect x={3151.500} y={240} width={103} height={103} fill="#a5a6aa" />
      <rect x={3172} y={260} width={64} height={64} fill="#979da6" />
      <text x={3204} y={302} fontSize={28} fontWeight={700} textAnchor="middle" fill="#50545c" fontFamily="Open Sans, sans-serif" textLength={43} lengthAdjust="spacingAndGlyphs">TOP</text>
      <g fontFamily="Liberation Sans, sans-serif" fontWeight={700} fill="#a6a6a6" textAnchor="middle">
        <text x={3204} y={197} fontSize={49}>N</text>
        <text x={3203} y={421} fontSize={46}>S</text>
        <text x={3091} y={308} fontSize={44}>W</text>
        <text x={3317} y={309} fontSize={50}>E</text>
      </g>
      <rect x={3153} y={469} width={101} height={24} rx={7} fill="#606971" />
      <text x={3162} y={489} fontSize={21} fill="#20262c" stroke="#20262c" strokeWidth={0.4} fontFamily="Liberation Sans, sans-serif" textLength={48}>WCS</text>
      {l('M3227 477 H3243 L3235 485Z', '#20262c', 1.500)}
    </svg>
  );
}

function Viewport() {
  return (
    <main className="relative h-[1984px] min-w-0 flex-1 overflow-hidden bg-[#20242b]">
      <Drawing />
      <div className="absolute top-[10px] left-[29px] flex items-center font-['Open_Sans',sans-serif] text-[23px] leading-8 font-semibold text-[#8f9092]">
        <Svg size={13}>{l('M6.500 0 V13 M0 6.500 H13', '#8f9092', 1.800)}</Svg>
        <span className="ml-[24px] h-[29px] w-[2px] bg-[#8f9092]" />
        <span className="ml-[12px] w-[46px]">Top</span>
        <span className="ml-[12px] h-[29px] w-[2px] bg-[#8f9092]" />
        <span className="ml-[11px]">2D Wireframe</span>
      </div>
      <div className="absolute bottom-0 left-[1001px] flex h-[48px] w-[1000px] items-center bg-[#333b49] pb-[2px] font-['Inter',sans-serif] text-[20px] text-[#a9adb3]">
        <div className="ml-4 flex w-[50px] items-center"><span className="text-[22px]">&gt;_</span><svg width={12} height={8} className="ml-1">{f('M0 0 H12 L6 7Z', '#c5c7ca')}</svg></div>
        <span className="ml-[22px] flex-1 italic">Type a command</span>
        <svg width={10} height={8}>{f('M0 7 H10 L5 0Z', '#a9adb3')}</svg>
        <div className="mr-[22px] ml-[24px]"><Svg size={26}>{l('M8 9 H2 V24 H24 V9 H18 M13 18 V4')}{f('M7 8 L13 0 L19 8Z')}</Svg></div>
      </div>
    </main>
  );
}

/* Right palettes */
const Caret = ({ c = '#cfd1d4' }: { c?: string }) => <svg width={12} height={8} className="shrink-0">{f('M0 0 H12 L6 8Z', c)}</svg>;
const Dock = () => <Svg size={28}>{l('M10 7 V2 H24 V27 H10 V21', '#e6e6e6')}{l('M9 3 H25', '#e6e6e6', 4)}{l('M6 14 H15', '#e6e6e6')}{f('M2 14 L7 9 V19Z', '#e6e6e6')}</Svg>;
const Swatch = () => <div className="size-[18px] shrink-0 border-2 border-black bg-white" />;
const lock = (c: string) => <>{l('M4 9 V6 A4 4 0 0 1 12 6 V9', c)}{f('M1 9 H15 V20 H1Z', c)}{l('M8 13 V17', '#3a4352', 1.500)}</>;
const snow = (c: string) => (
  <>
    {[0, 60, 120].map(a => <g key={a} transform={`rotate(${a + 90} 9 9)`}>{l('M9 0 V18 M6 2 L9 5 L12 2 M6 16 L9 13 L12 16', c, 1.800)}</g>)}
    {o(9, 9, 4, c, 1.500)}
  </>
);
const st = (y: number, c = W) => f(`M${10} ${y} H27 L18 ${y + 9} H1Z`, c);
const edge = (y: number, c = W) => f(`M1 ${y + 6} H17 L27 ${y - 3} H24 L16 ${y + 3} H4Z`, c);
const slab = f('M13 5 H29 L17 17 H0Z');
const layerTools: Node[] = [
  <>{f('M9 7 H32 L22 17 H0Z', BF)}{edge(18)}{edge(25)}<circle cx={16} cy={7} r={7.500} fill="#333c4a" /><circle cx={16} cy={7} r={6} fill={W} /></>,
  <>{st(0)}{edge(9)}{edge(16)}{f('M15 24 L22 19 L32 20 L26 33Z', '#333c4a')}{f('M16 24 L20 21 L28 31 L24 32Z', Y)}{f('M22 21 L27 23 L29 18 L32 24 L27 28Z', '#f2f2f2')}</>,
  <>{f('M0 7 L9 1 V5 Q20 5 21 13 Q16 9 9 10 V14Z', B)}{f('M21 7 H30 L22 14 H4 L6 12 H20Z')}{at(4, 0, edge(15))}{at(4, 0, edge(22))}</>,
  <>{st(0)}{edge(9)}{edge(16, BF)}{l('M29 19 L21 27', '#fff', 2.500)}{f('M16 31 L18 22 L25 29Z', '#fff')}</>,
  <>{st(0)}{edge(9)}{edge(16, BF)}{l('M17 30 L26 22', '#fff', 2.500)}{f('M31 17 L29 27 L22 19Z', '#fff')}</>,
  <>{at(-1, -3, slab)}{at(14, 12, snow(C))}</>,
  <>{at(-1, -3, slab)}{at(17, 12, bulb(C))}</>,
  <>{at(-1, -3, slab)}{at(16, 10, lock(C), 0.95)}</>,
  <>{at(-1, -3, slab)}{f('M13 17 H27 V28 H13Z', Y)}{l('M23 18 V14 A4 4 0 0 1 31 14 V18', Y)}{l('M20 20 V24', '#333c4a', 1.500)}</>,
];

interface Prop { label: string; value: string; kind?: 'select' | 'input' | 'off' | 'color' | 'line' | 'trans'; }
const props: Prop[] = [
  { label: 'Color', value: 'ByLayer', kind: 'color' },
  { label: 'Layer', value: '0' },
  { label: 'Linetype', value: 'ByLa...', kind: 'line' },
  { label: 'Linetype scale', value: '1', kind: 'input' },
  { label: 'Lineweight', value: 'ByLayer' },
  { label: 'Transparency', value: '0', kind: 'trans' },
  { label: 'Text style', value: 'GOST' },
  { label: 'Dimension st...', value: 'Copy of ISO-25' },
  { label: 'Multileader s...', value: 'Standard' },
  { label: 'Table style', value: 'Standard' },
  { label: 'Annotation s...', value: '1:1' },
  { label: 'Text height', value: '2.5', kind: 'input' },
  { label: 'Plot style', value: 'ByColor' },
  { label: 'Plot style table', value: 'None' },
  { label: 'Plot style att...', value: 'Model', kind: 'off' },
  { label: 'Plot table type', value: 'Not available', kind: 'off' },
];

function PropField({ p }: { p: Prop }) {
  const k = p.kind ?? 'select';
  if (k === 'trans') {
    return (
      <div className="flex w-[217px] items-center">
        <div className="relative ml-[6px] flex h-8 w-[125px] items-center justify-end border-2 border-[#2a3438] bg-[#454f62] pr-[5px]">
          <svg width={4} height={24} className="absolute top-[2px] left-0">{f('M0 0 H3 L0 5Z M0 24 H3 L0 19Z', '#4f93ef')}</svg>
          <span className="absolute bottom-[1px] left-[58px] h-[11px] w-px bg-[#9aa0a8]" />
          {p.value}
        </div>
        <div className="ml-[6px] flex h-[37px] w-[78px] items-center justify-between rounded-[4px] border-2 border-[#2a3438] bg-[#454f62] pr-[9px] pl-[14px]">
          <Svg size={26}>{at(-1, -1, <>{st(3, BF)}{edge(14)}{edge(20)}</>)}</Svg><Caret />
        </div>
      </div>
    );
  }
  if (k === 'off') {
    return <div className="flex h-[37px] w-[217px] items-center rounded-[4px] border-2 border-[#303a45] bg-[#3a4352] pt-[2px] pl-[6px] text-[#788089]">{p.value}</div>;
  }
  if (k === 'input') {
    const tall = p.value === '2.5';
    return (
      <div className="flex w-[217px] items-center">
        <div className="flex h-[37px] min-w-0 flex-1 items-center rounded-[4px] border-2 border-[#2a3438] bg-[#454f62] pt-[2px] pl-[6px]">{p.value}</div>
        {tall && <div className="ml-1 flex h-9 w-10 items-center justify-center border-2 border-[#2c3840]"><Svg>{l('M1 0 V27 M29 0 V12')}{dimArrow(4, 27, 5, B)}{l('M23 14 V31 M14 22.500 H32 M19 18.500 H27 V26.500 H19Z')}</Svg></div>}
      </div>
    );
  }
  return (
    <div className="flex h-[38px] w-[217px] items-center rounded-[4px] border-2 border-[#2a3438] bg-[#454f62] pr-[7px] pl-3">
      {k === 'color' && <div className="mr-[20px] ml-[6px]"><Swatch /></div>}
      {k === 'line' && <div className="mr-[27px] ml-[2px] h-[2px] w-16 bg-white" />}
      <span className="flex-1 pb-[2px] tracking-[0.4px] whitespace-nowrap [word-spacing:3px]">{p.value}</span>
      <Caret />
    </div>
  );
}

function LayerRow({ name, active = false }: { name: string; active?: boolean }) {
  return (
    <div className={active ? 'ml-[2px] flex h-[38px] items-center bg-[#8494a6]' : 'ml-[2px] flex h-[38px] items-center'}>
      <span className="ml-[26px] size-4 rounded-full bg-[#d6d6d6]" />
      <div className="ml-[18px]"><Swatch /></div>
      <span className="ml-[18px] w-[182px]">{name}</span>
      <span className="w-[95px]">De...</span>
      <span className="h-[2px] flex-1 bg-white" />
    </div>
  );
}

function RightPanel() {
  return (
    <aside className="flex w-[472px] shrink-0 flex-col bg-[#333c4a] font-['Inter',sans-serif] text-[20px] leading-6 font-medium text-[#f5f5f5]">
      <div className="flex h-[34px] shrink-0 items-center justify-between pr-5 pl-[20px] text-[23px]"><span className="pb-[3px]">Layers</span><Dock /></div>
      <div className="mt-[31px] flex h-8 shrink-0 gap-4 pl-7">{layerTools.map((n, i) => <Svg key={i}>{n}</Svg>)}</div>
      <div className="mt-[22px] ml-[19px] flex h-[53px] w-[438px] shrink-0 items-center rounded-[5px] border-2 border-[#2a3438] bg-[#454f62] pr-[8px] pl-[19px]">
        <span className="size-4 rounded-full bg-[#d6d6d6]" />
        <svg width={16} height={21} className="ml-[18px]">{lock('#646d7b')}</svg>
        <svg width={18} height={18} className="ml-[17px]">{snow('#646d7b')}</svg>
        <div className="ml-[15px]"><Swatch /></div>
        <span className="ml-[24px] flex-1 pb-[2px] text-[22px]">0</span>
        <Caret />
      </div>
      <div className="mt-[3px] ml-[20px] flex h-[53px] w-[436px] shrink-0 items-center justify-between rounded-[5px] border-2 border-[#2a3438] bg-[#454f62] pr-[8px] pl-[13px] text-[21px]"><span className="pb-[3px] tracking-[0.1px]">Unsaved Layer State</span><Caret /></div>
      <div className="flex h-[52px] shrink-0 items-center pb-[3px] pl-7 text-[21px] font-normal text-[#c3c5c9]">
        <Svg size={16}>{l('M1 4 L8 11 L15 4', '#c3c5c9', 2.500)}</Svg><span className="ml-[25px] tracking-[0.4px]">Hide Layer List</span>
      </div>
      <div className="mt-[2px] ml-[20px] flex h-[288px] w-[432px] shrink-0 flex-col border-2 border-[#2d3643]">
        <div className="flex h-[48px] shrink-0 bg-[#2a2e38] pb-[2px]">
          <div className="flex w-[65px] items-center justify-center"><Svg size={24}>{f('M0 12 Q12 -1 24 12 Q12 25 0 12Z')}<circle cx={12} cy={12} r={4.500} fill={W} stroke="#2a2e38" strokeWidth={2} /></Svg></div>
          <div className="relative flex w-[114px] items-center bg-[#454f62] pl-2">
            <Svg size={16}>{l('M1 15 V1 H15')}{f('M15 1 V15 H1Z')}</Svg>
            <span className="ml-[14px] w-[50px] text-[22px] font-bold text-[#c9cbcf]">N...</span>
            <Svg size={12}>{f('M1 5 L6 -1 L11 5Z M1 9 L6 15 L11 9Z')}</Svg>
            <svg width={12} height={9} className="absolute bottom-0 left-[50px]">{f('M0 9 L6 0 L12 9Z', '#3089e8')}</svg>
          </div>
          <div className="flex w-[44px] items-center justify-center"><Svg size={18}>{snow(W)}</Svg></div>
          <div className="flex w-[43px] items-center justify-center border-l-2 border-[#262a32]"><svg width={16} height={21}>{lock(W)}</svg></div>
          <div className="flex w-[93px] items-center justify-center border-l-2 border-[#262a32]"><Svg size={18}>{l('M0 3 H18 M0 9 H18')}{l('M0 15 H18', W, 3)}</Svg></div>
          <div className="flex flex-1 items-center justify-center border-l border-[#262a32] pl-[22px]"><Svg size={18}>{l('M0 3 H3 M5 3 H8 M10 3 H13 M15 3 H18 M0 9 H4 M7 9 H12 M14 9 H18 M0 15 H18', W, 1.800)}</Svg></div>
        </div>
        <div className="h-[207px] shrink-0 border-b-2 border-l-2 border-[#272c35] bg-[#454f61] text-[21px]">
          <LayerRow name="0" active />
          <LayerRow name="Defpo..." />
        </div>
        <div className="mt-3 ml-1 h-[9px] w-[351px] rounded-full bg-[#838a90]" />
      </div>
      <div className="flex h-[51px] shrink-0 items-center pb-[2px] pl-[36px]">
        <Svg size={28}>{l('M12 4 H26 L17 13 H3Z')}{l('M2 19 H17 L27 9 M2 25 H17 L27 15', '#a5a8ad', 1.800)}</Svg>
        <div className="ml-[31px]"><Svg size={30}>{l('M11 3 H22 L15 10 H2Z')}{l('M2 16 H12 M24 10 L20 13 M2 22 H10', '#a5a8ad', 1.800)}{l('M13 17 H29 V28 H13Z M16 20.500 H18 M20 20.500 H26 M16 24.500 H18 M20 24.500 H26', '#e6e6e6', 1.800)}</Svg></div>
        <div className="ml-[31px]"><Svg size={28}>{f('M0 24 V5 H10 L13 8 H22 V10 H7Z')}{f('M8 12 H27 L20 24 H1Z')}</Svg></div>
        <div className="ml-[33px]"><Svg size={28}>{f('M0 24 V5 H10 L13 8 H22 V10 H7Z')}{f('M8 12 H27 L20 24 H1Z')}{f('M17 11 L10 18 L14 19 L12 24 L21 16 L16 16Z', '#333c4a')}</Svg></div>
        <span className="ml-[109px] h-1 w-4 bg-[#757c87]" />
        <div className="ml-[34px]"><Svg size={20}>{l('M1 3 H19 V17 H1Z M7 3 V17 M13 3 V17')}</Svg></div>
        <svg width={10} height={7} className="ml-[6px]">{f('M0 0 H10 L5 7Z')}</svg>
      </div>
      <div className="ml-[22px] flex h-[40px] w-[428px] shrink-0 items-center rounded-[9px] bg-white pl-2 text-[23px] font-normal text-[#b9bcc0]">
        <Svg size={38}>{o(11, 17, 9.500, '#222', 2)}{l('M18 23 L25 30 M25 17 L30 22 L35 17', '#222', 2.200)}</Svg>
        <span className="ml-[9px] tracking-[0.7px]">Search for layer</span>
      </div>
      <div className="mt-[18px] h-[2px] shrink-0 bg-[#20252d]" />
      <div className="flex h-[32px] shrink-0 items-center pr-[18px] pl-[20px]">
        <span className="flex-1 pb-[2px] text-[22px] tracking-[0.3px]">Properties</span>
        <div className="flex h-[27px] w-[120px] border-2 border-[#262b34] text-[15px] leading-[23px]">
          <span className="w-[56px] bg-[#353d4a] text-center text-[#7f858e]">All</span>
          <span className="flex-1 border-l border-[#262b34] bg-[#454f62] text-center">My</span>
        </div>
        <div className="ml-5"><Svg size={28}>{l('M11 23 H1 V3 H19 V10', W)}{l('M4 8 H16 M4 12 H14 M4 16 H12')}{f('M12 22 L20 13 L27 18 L18 27 H12Z')}</Svg></div>
        <div className="ml-[18px]"><Dock /></div>
      </div>
      <div className="mt-[15px] ml-[20px] flex h-[42px] w-[432px] shrink-0 items-center justify-between rounded-[4px] border-2 border-[#303a45] bg-[#3a4352] pr-[8px] pl-[13px] text-[21px] text-[#788089]"><span>Model Space</span><Caret c="#6f7780" /></div>
      <div className="mt-[13px] flex flex-col gap-2 tracking-[0.25px]">
        {props.map(p => (
          <div key={p.label} className="flex h-[38px] items-center pl-[66px]">
            <div className="flex w-[143px] pb-[2px]"><span className="ml-auto shrink-0 whitespace-nowrap text-[#c8cacd] [word-spacing:1px]">{p.label}</span></div>
            <div className="ml-[19px] flex items-center"><PropField p={p} /></div>
          </div>
        ))}
      </div>
    </aside>
  );
}

/* Status bar */
const compass = (c = '#fff') => f('M16 0 L20 18 L28 30 L20 27 L16 22 L12 27 L4 30 L12 18Z', c);
const statusItems: { n: Node; on?: boolean }[] = [
  { on: true, n: l('M8 1 V31 M16 1 V31 M24 1 V31 M1 8 H31 M1 16 H31 M1 24 H31', '#fff', 2) },
  { n: <>{[5, 15, 25].map(y => <React.Fragment key={y}>{l(`M4 ${y} H8 M14 ${y} H18 M24 ${y} H28`, W, 4)}</React.Fragment>)}</> },
  { on: true, n: l('M2 1 V30 H31 M2 21 H11 V30', '#fff', 2) },
  { n: <>{l('M22 6 A12 12 0 1 0 26 19 M12 17 H30 M12 17 L26 2 M20 9 Q24 13 23 21', W, 2)}</> },
  { on: true, n: <>{l('M8 4 V18 M1 11 H15', '#fff')}{f('M13 18 H32 V28 H13Z', '#fff')}{l('M17 20 V23', '#5f8bbd')}</> },
  { n: <>{l('M1 4 H32 M1 8 H14 M1 14 H32', W, 2)}{l('M1 16 H16 M1 24 H32', W, 3)}{l('M1 28 H16', W, 6)}</> },
  { on: true, n: <>{l('M2 2 H29 V30 H2Z', '#fff')}{[0, 1, 2, 3, 4].map(i => [0, 1, 2, 3, 4].map(j => (i + j) % 2 === 0 && <rect key={`${i}${j}`} x={6 + i * 4} y={6 + j * 4} width={4} height={4} fill="#fff" />))}</> },
  { on: true, n: <>{l('M7 2 H2 V30 H7 M17 2 H22 V16 M8 5 H15 V11 H8Z', '#fff')}{o(12, 19, 4, '#fff')}{f('M18 13 L32 26 L25 27 L20 32Z', '#fff')}</> },
  { on: true, n: <>{l('M24 2 L2 28 H32', '#fff')}{q(15, 14, '#fff', 6)}</> },
  { on: true, n: <>{l('M12 6 H31 V30 H6 V12 M1 2 H9 V9 H1Z', '#fff')}</> },
  { on: true, n: <>{at(-2, 0, compass())}<circle cx={25} cy={8} r={6.500} fill="#fff" /></> },
  { n: <>{at(-2, 0, compass(W))}{at(18, 2, bolt, 0.8)}</> },
  { n: compass(W) },
];
const bars = l('M3 3 H23 M7 8 H23 M3 13 H23 M7 18 H23', W, 2);

function StatusBar() {
  return (
    <footer className="flex h-[48px] shrink-0 border-b-2 border-[#20252d] bg-[#333c4a] font-['Inter',sans-serif] text-[20px] text-[#b9bcc1]">
      <div className="flex w-[368px] items-center gap-[36px] bg-[#353b47] pt-1 pl-[31px]"><Svg size={22}>{l('M11 0 V22 M0 11 H22')}</Svg><Svg size={26}>{at(0, 2, bars)}</Svg></div>
      <div className="flex flex-1 items-center border-t-2 border-[#20252d]">
        <div className="flex h-full w-[118px] items-center justify-center border-x-2 border-[#20252d] bg-[#445063] pb-px font-semibold text-white">Model</div>
        <div className="flex h-full w-[50px] items-center justify-center border-r-2 border-[#20252d]"><Svg size={20}>{l('M10 0 V20 M0 10 H20')}</Svg></div>
        <div className="flex h-full w-[117px] items-center justify-center border-r-2 border-[#20252d] pb-px tracking-[0.2px]">Layout1</div>
        <div className="flex h-full w-[118px] items-center justify-center border-r-2 border-[#20252d] pb-px tracking-[0.2px]">Layout2</div>
        <div className="flex-1" />
        <span className="mr-[9px] flex h-full items-center border-l-2 border-[#20252d] pl-[26px] text-[22px] tracking-[0.35px] whitespace-nowrap text-[#b0b3b6]">115.8999, -21.8779, 0.0000</span>
        <div className="flex gap-1">
          {statusItems.map((s, i) => (
            <div key={i} className={s.on ? 'flex size-10 items-center justify-center bg-[#5b86b5]' : 'flex size-10 items-center justify-center'}><Svg>{s.n}</Svg></div>
          ))}
        </div>
        <span className="ml-px w-[30px] text-[22px]">1:1</span>
        <svg width={12} height={9} className="ml-[4px]">{f('M0 0 H12 L6 9Z')}</svg>
        <div className="ml-[18px]"><Svg size={34}>{l('M2 3 H13 V15 H2Z M13 21 L7 32 H20Z')}{o(25, 15, 6.500)}</Svg></div>
        <div className="mr-[14px] ml-[9px]"><Gear size={31} color={W} bg="#333c4a" /></div>
      </div>
    </footer>
  );
}

export default function App() {
  return (
    <div className="flex h-[2160px] w-[3840px] flex-col overflow-hidden bg-[#333c4a]">
      <TopToolbar />
      <TabsRow />
      <div className="flex min-h-0 flex-1">
        <div className="-mt-[2px] flex"><ToolPalette /></div>
        <Viewport />
        <RightPanel />
      </div>
      <StatusBar />
    </div>
  );
}
